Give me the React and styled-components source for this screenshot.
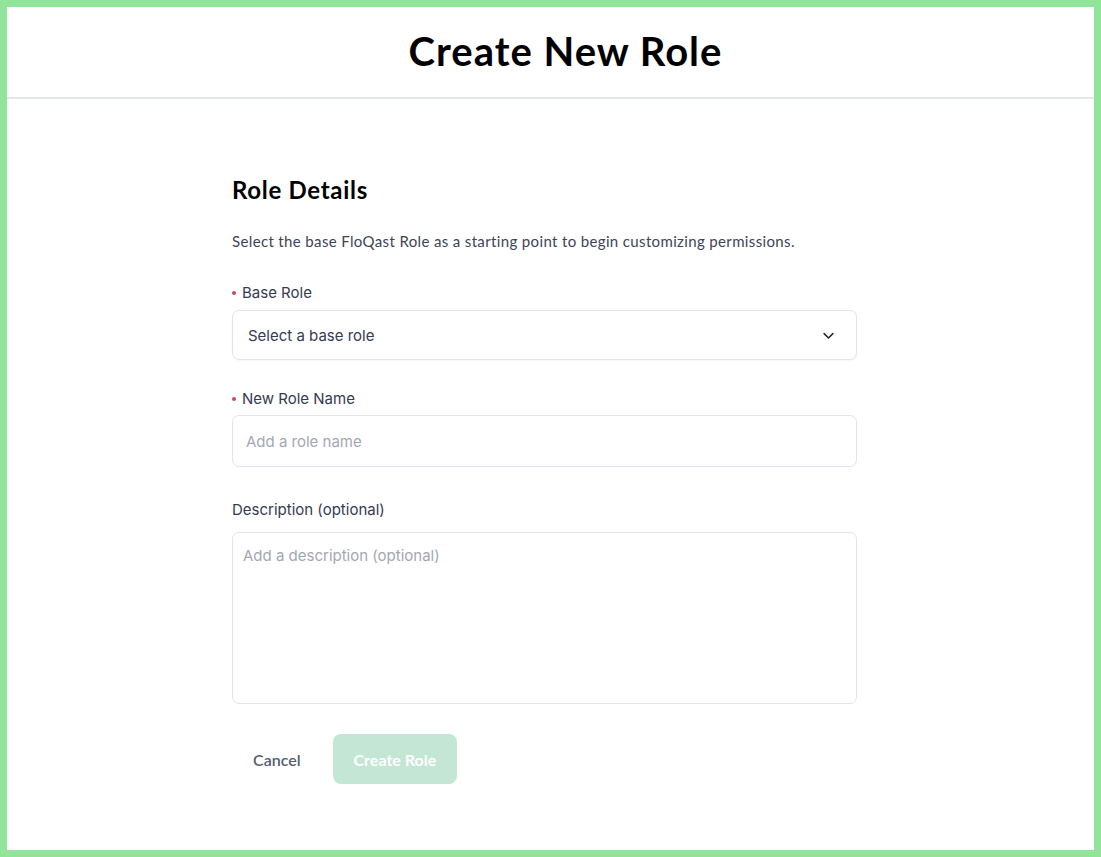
import React from 'react'
import styled, { createGlobalStyle } from 'styled-components';

const GlobalStyle = createGlobalStyle`
    html, body {
        margin: 0;
        padding: 0;
        background: #ffffff;
    }
    * { box-sizing: border-box; }
`

const Frame = styled.div`
    width: 1101px;
    height: 857px;
    border: 7px solid #90e59a;
    background: #ffffff;
    display: flex;
    flex-direction: column;
`

const Header = styled.header`
    height: 92px;
    border-bottom: 2px solid #e3e6ef;
    display: flex;
    align-items: center;
    justify-content: center;
    padding-left: 30px;
`

const Title = styled.h1`
    margin: 0;
    padding-bottom: 3px;
    font-family: Lato, "Liberation Sans", sans-serif;
    font-weight: 700;
    font-size: 40px;
    color: #000000;
    letter-spacing: 1px;
`

const Content = styled.main`
    width: 625px;
    margin-left: 225px;
    padding-top: 76px;
    display: flex;
    flex-direction: column;
`

const SectionTitle = styled.h2`
    margin: 0;
    font-family: Lato, "Liberation Sans", sans-serif;
    font-weight: 700;
    font-size: 24px;
    line-height: 30px;
    letter-spacing: 0.7px;
    color: #000000;
`

const Intro = styled.p`
    margin: 26px 0 0;
    font-family: Lato, "Liberation Sans", sans-serif;
    font-size: 15px;
    line-height: 20px;
    letter-spacing: 0.36px;
    color: #3d4459;
`

const Field = styled.div`
    display: flex;
    flex-direction: column;
    margin-top: ${props => props.gap || 28}px;
`

const Label = styled.label`
    font-family: Inter, "Liberation Sans", sans-serif;
    font-size: 15px;
    line-height: 20px;
    color: #343b52;
    display: flex;
    align-items: center;
    margin-bottom: ${props => props.space || 7}px;
`

const Required = styled.span`
    width: 4px;
    height: 4px;
    border-radius: 50%;
    background: #d0475a;
    margin: 0 6px 0 0;
`

const SelectBox = styled.div`
    height: 50px;
    border: 1px solid #e1e3ef;
    border-radius: 7px;
    padding: 0 20px 0 15px;
    display: flex;
    align-items: center;
    justify-content: space-between;
    font-family: Inter, "Liberation Sans", sans-serif;
    font-size: 15px;
    color: #343b52;
    box-shadow: 0 1px 2px rgba(30, 40, 80, 0.04);
`

const TextInput = styled.div`
    height: 52px;
    border: 1px solid #e1e3ef;
    border-radius: 7px;
    padding: 0 13px;
    display: flex;
    align-items: center;
    font-family: Inter, "Liberation Sans", sans-serif;
    font-size: 15px;
    color: #a3a7b4;
`

const TextArea = styled.div`
    height: 172px;
    border: 1px solid #e1e3ef;
    border-radius: 7px;
    padding: 13px 10px;
    font-family: Inter, "Liberation Sans", sans-serif;
    font-size: 15px;
    line-height: 20px;
    color: #a3a7b4;
`

const Actions = styled.div`
    margin-top: 30px;
    display: flex;
    align-items: center;
    gap: 11px;
`

const Button = styled.button`
    height: 50px;
    border: none;
    border-radius: 8px;
    font-family: Lato, "Liberation Sans", sans-serif;
    font-weight: ${props => props.primary ? 700 : 600};
    font-size: 16px;
    cursor: pointer;
    padding: 0 21px;
    background: ${props => props.primary ? '#c4e7d5' : 'transparent'};
    color: ${props => props.primary ? '#ffffff' : '#565d70'};
`

const Chevron = () => (
    <svg width="15" height="15" viewBox="0 0 24 24" fill="none" stroke="#1f2433" strokeWidth="2.4" strokeLinecap="round" strokeLinejoin="round">
        <path d="M5 9l7 7 7-7" />
    </svg>
)

export default function App() {
    return (
        <>
            <GlobalStyle />
            <Frame>
                <Header>
                    <Title>Create New Role</Title>
                </Header>
                <Content>
                    <SectionTitle>Role Details</SectionTitle>
                    <Intro>Select the base FloQast Role as a starting point to begin customizing permissions.</Intro>

                    <Field gap={32}>
                        <Label space={7}><Required />Base Role</Label>
                        <SelectBox>
                            <span>Select a base role</span>
                            <Chevron />
                        </SelectBox>
                    </Field>

                    <Field gap={29}>
                        <Label space={6}><Required />New Role Name</Label>
                        <TextInput>Add a role name</TextInput>
                    </Field>

                    <Field gap={33}>
                        <Label space={12}>Description (optional)</Label>
                        <TextArea>Add a description (optional)</TextArea>
                    </Field>

                    <Actions>
                        <Button>Cancel</Button>
                        <Button primary disabled>Create Role</Button>
                    </Actions>
                </Content>
            </Frame>
        </>
    );
}
